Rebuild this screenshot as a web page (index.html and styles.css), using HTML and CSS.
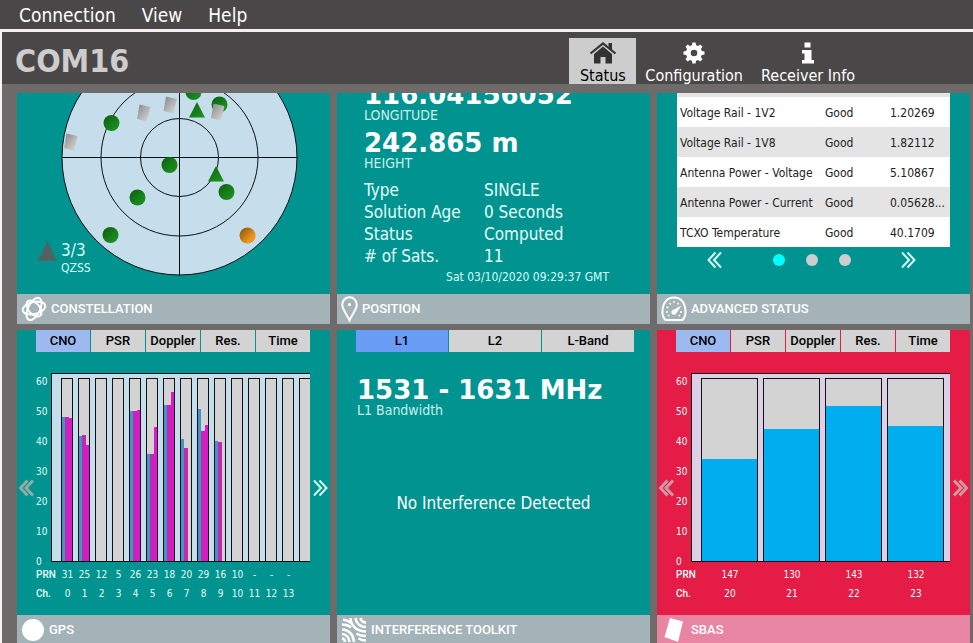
FILE: index.html
```html
<!DOCTYPE html>
<html lang="en">
<head>
<meta charset="utf-8">
<title>COM16</title>
<link rel="stylesheet" href="styles.css">
</head>
<body>
<svg class="defs" width="0" height="0" aria-hidden="true">
  <symbol id="chev-left" viewBox="0 0 16 18"><path d="M8.500 1.500L1.500 9l7 7.500M14 1.500L7 9l7 7.500" fill="none" stroke="currentColor"/></symbol>
  <symbol id="chev-right" viewBox="0 0 16 18"><path d="M7.500 1.500l7 7.500-7 7.500M2 1.500L9 9l-7 7.500" fill="none" stroke="currentColor"/></symbol>
</svg>
<nav class="menubar" aria-label="Menu">
  <button type="button">Connection</button>
  <button type="button">View</button>
  <button type="button">Help</button>
</nav>
<div class="window">
  <header class="header">
    <h1>COM16</h1>
    <nav class="nav" aria-label="Pages">
      <a href="#status" class="active">
        <svg width="28" height="22" viewBox="0 0 28 22" aria-hidden="true"><path d="M14 4.600L5 12v9.500h6.500V15h5v6.500H23V12z" fill="currentColor"/><path d="M1.500 11.500L14 1.500l12.500 10" fill="none" stroke="currentColor" stroke-width="2.200"/><path d="M19.500 1H23v8l-3.500-3z" fill="currentColor"/></svg>
        <span>Status</span>
      </a>
      <a href="#configuration">
        <svg width="22" height="22" viewBox="0 0 22 22" aria-hidden="true"><g fill="currentColor"><path fill-rule="evenodd" d="M11 3a8 8 0 1 0 0 16a8 8 0 1 0 0-16zm0 4.700a3.300 3.300 0 1 1 0 6.600a3.300 3.300 0 1 1 0-6.600z"/><path id="cog" d="M8.800 4l.6-3.500h3.200l.6 3.500zM8.800 18l.6 3.500h3.200l.6-3.500zM4 8.800l-3.500.6v3.200l3.500.6zM18 8.800l3.500.6v3.200l-3.500.6z"/><use href="#cog" transform="rotate(45 11 11)"/></g></svg>
        <span>Configuration</span>
      </a>
      <a href="#receiver">
        <svg width="14" height="22" viewBox="0 0 14 22" aria-hidden="true"><path d="M3.500.5h6v5h-6zM1 8h9.500v10H13v3.500H1V18h2.500v-6.500H1z" fill="currentColor"/></svg>
        <span>Receiver Info</span>
      </a>
    </nav>
  </header>
  <main class="board">
    <section class="tile">
      <div class="content sky">
        <svg viewBox="17 93 313 201" preserveAspectRatio="xMidYMax slice" role="img" aria-label="Sky plot">
          <defs>
            <linearGradient id="green" x1="0" y1="0" x2="1" y2="1"><stop offset="0" stop-color="#0a5c10"/><stop offset=".6" stop-color="#17831b"/><stop offset="1" stop-color="#1c9420"/></linearGradient>
            <linearGradient id="orange" x1="0" y1="0" x2="1" y2="1"><stop offset="0" stop-color="#7a5212"/><stop offset=".7" stop-color="#ef941c"/></linearGradient>
            <linearGradient id="silver" x1="0" y1="0" x2="1" y2="1"><stop offset="0" stop-color="#858585"/><stop offset="1" stop-color="#dedede"/></linearGradient>
            <path id="sbas" d="M-4.500-8.500l11 2.500-3.500 14.500-10-2.500z" fill="url(#silver)"/>
            <path id="qzss" d="M0-8l8 15.500H-8z" fill="url(#green)"/>
          </defs>
          <g stroke="#0b0f14" fill="none">
            <circle cx="179.500" cy="157.500" r="117.500" fill="#c6deeb"/>
            <circle cx="179.500" cy="157.500" r="78.500"/>
            <circle cx="179.500" cy="157.500" r="39"/>
            <path d="M62 157.500h236M179.500 40v236"/>
          </g>
          <g fill="url(#green)">
            <circle cx="193.500" cy="92" r="8"/><circle cx="219.500" cy="104.500" r="8"/><circle cx="111.500" cy="123" r="8"/>
            <circle cx="169.500" cy="165" r="8"/><circle cx="137.500" cy="197.500" r="8"/><circle cx="226.500" cy="192" r="8"/><circle cx="110.500" cy="235" r="8"/>
          </g>
          <circle cx="247.500" cy="235.500" r="8" fill="url(#orange)"/>
          <use href="#qzss" x="197" y="110"/><use href="#qzss" x="216" y="174"/>
          <use href="#sbas" x="71" y="142"/><use href="#sbas" x="144" y="113"/><use href="#sbas" x="170.500" y="105"/><use href="#sbas" x="218" y="112"/>
          <path d="M47.500 241l9.500 20H37.500z" fill="#4d6463"/>
          <text class="count" x="61" y="256">3/3</text>
          <text class="system" x="61" y="272">QZSS</text>
        </svg>
      </div>
      <h2 class="bar">
        <svg width="26" height="26" viewBox="0 0 26 26" aria-hidden="true"><g fill="none" stroke="currentColor" stroke-width="2"><ellipse cx="13" cy="12" rx="11.500" ry="6" transform="rotate(-14 13 12)"/><ellipse cx="13" cy="13" rx="12" ry="6" transform="rotate(-64 13 13)"/><ellipse cx="13" cy="12.500" rx="9.500" ry="5.500" transform="rotate(50 13 12.500)"/></g></svg>
        CONSTELLATION
      </h2>
    </section>

    <section class="tile">
      <div class="content position">
        <p class="big">116.04156052°</p>
        <p class="caption">LONGITUDE</p>
        <p class="big">242.865 m</p>
        <p class="caption">HEIGHT</p>
        <dl>
          <dt>Type</dt><dd>SINGLE</dd>
          <dt>Solution Age</dt><dd>0 Seconds</dd>
          <dt>Status</dt><dd>Computed</dd>
          <dt># of Sats.</dt><dd>11</dd>
        </dl>
        <p class="time">Sat 03/10/2020 09:29:37 GMT</p>
      </div>
      <h2 class="bar">
        <svg width="17" height="26" viewBox="0 0 17 26" aria-hidden="true"><path d="M8.500 24.500C6 18.500 1.200 13.500 1.200 8.600a7.300 7.300 0 0 1 14.600 0c0 4.900-4.800 9.900-7.300 15.900z" fill="none" stroke="currentColor" stroke-width="2"/><circle cx="8.500" cy="8.500" r="1.600" fill="currentColor"/></svg>
        POSITION
      </h2>
    </section>

    <section class="tile">
      <div class="content health">
        <table>
          <tbody>
            <tr><td>Voltage Rail - 1V2</td><td>Good</td><td>1.20269</td></tr>
            <tr><td>Voltage Rail - 1V8</td><td>Good</td><td>1.82112</td></tr>
            <tr><td>Antenna Power - Voltage</td><td>Good</td><td>5.10867</td></tr>
            <tr><td>Antenna Power - Current</td><td>Good</td><td>0.05628...</td></tr>
            <tr><td>TCXO Temperature</td><td>Good</td><td>40.1709</td></tr>
          </tbody>
        </table>
        <div class="pager">
          <button type="button" class="arrow" aria-label="Previous"><svg width="16" height="18"><use href="#chev-left"/></svg></button>
          <div class="dots">
            <button type="button" class="dot current" aria-label="Page 1"></button>
            <button type="button" class="dot" aria-label="Page 2"></button>
            <button type="button" class="dot" aria-label="Page 3"></button>
          </div>
          <button type="button" class="arrow" aria-label="Next"><svg width="16" height="18"><use href="#chev-right"/></svg></button>
        </div>
      </div>
      <h2 class="bar">
        <svg width="26" height="26" viewBox="0 0 26 26" aria-hidden="true"><path d="M4.500 24A11.500 11.500 0 0 1 1.500 15.500C1.500 7 6 1.500 13 1.500S24.500 7 24.500 15.500A11.500 11.500 0 0 1 21.500 24z" fill="none" stroke="currentColor" stroke-width="2"/><path d="M5 16h2M5.500 11l2 .8M8.500 7l1.200 1.500M13 5v2M17.500 7l-1 1.500M21 16h-2M7 20l1.500-1M19 20l-1.500-1" stroke="currentColor" stroke-width="1.400"/><path d="M20.500 9.500l-5.200 7.800a2.600 2.600 0 1 1-2.800-3.600z" fill="currentColor"/></svg>
        ADVANCED STATUS
      </h2>
    </section>

    <section class="tile">
      <div class="content signal">
        <div class="tabs">
          <button type="button" class="on">CNO</button><button type="button">PSR</button><button type="button">Doppler</button><button type="button">Res.</button><button type="button">Time</button>
        </div>
        <div class="chart">
          <button type="button" class="arrow dim" aria-label="Previous"><svg width="16" height="18"><use href="#chev-left"/></svg></button>
          <div class="graph">
            <div class="axis"><span>60</span><span>50</span><span>40</span><span>30</span><span>20</span><span>10</span><span>0</span></div>
            <div class="plot narrow">
              <div class="slot"><i style="--v:48"></i><i style="--v:48"></i><i style="--v:47.700"></i></div>
              <div class="slot"><i style="--v:41.700"></i><i style="--v:42"></i><i style="--v:38.700"></i></div>
              <div class="slot"></div>
              <div class="slot"></div>
              <div class="slot"><i style="--v:50"></i><i style="--v:50"></i><i style="--v:50.300"></i></div>
              <div class="slot"><i style="--v:35.700"></i><i style="--v:35.700"></i><i style="--v:44.700"></i></div>
              <div class="slot"><i style="--v:52"></i><i style="--v:52"></i><i style="--v:56.300"></i></div>
              <div class="slot"><i style="--v:40.700"></i><i style="--v:37.700"></i></div>
              <div class="slot"><i style="--v:50.700"></i><i style="--v:43.300"></i><i style="--v:45.300"></i></div>
              <div class="slot"><i style="--v:40"></i><i style="--v:39.700"></i></div>
              <div class="slot"></div><div class="slot"></div><div class="slot"></div><div class="slot"></div><div class="slot"></div>
            </div>
            <table class="legend narrow">
              <tbody>
                <tr><th scope="row">PRN</th><td>31</td><td>25</td><td>12</td><td>5</td><td>26</td><td>23</td><td>18</td><td>20</td><td>29</td><td>16</td><td>10</td><td>-</td><td>-</td><td>-</td></tr>
                <tr><th scope="row">Ch.</th><td>0</td><td>1</td><td>2</td><td>3</td><td>4</td><td>5</td><td>6</td><td>7</td><td>8</td><td>9</td><td>10</td><td>11</td><td>12</td><td>13</td></tr>
              </tbody>
            </table>
          </div>
          <button type="button" class="arrow" aria-label="Next"><svg width="16" height="18"><use href="#chev-right"/></svg></button>
        </div>
      </div>
      <h2 class="bar">
        <svg width="24" height="24" viewBox="0 0 24 24" aria-hidden="true"><circle cx="12" cy="12" r="11" fill="currentColor"/></svg>
        GPS
      </h2>
    </section>

    <section class="tile">
      <div class="content signal">
        <div class="tabs bands">
          <button type="button" class="on">L1</button><button type="button">L2</button><button type="button">L-Band</button>
        </div>
        <div class="interference">
          <p class="big">1531 - 1631 MHz</p>
          <p class="caption">L1 Bandwidth</p>
          <p class="verdict">No Interference Detected</p>
        </div>
      </div>
      <h2 class="bar">
        <svg width="26" height="26" viewBox="0 0 26 26" aria-hidden="true"><g fill="none" stroke="currentColor" stroke-width="2.600"><path d="M1 12.500c6.500 0 11.500 5 12 12.500M1 17c4 0 7 3 7.500 8M1 21.500c1.500 0 2.800 1.200 3 3.500M1 7.500c4.500 0 7 1.200 9 3M2 2.500c4 .3 6 1.800 8 3.500M9.500 1c.5 8 6.500 13.500 15.500 13.500M14.500 1c.5 5 4.500 9 10.500 9M19.500 1c.3 2.500 2.500 4.500 5.500 4.500M25 19c-4 0-7-.8-9.500-2.500M25 23.500c-3 0-5.500-.8-7.500-2.300"/></g></svg>
        INTERFERENCE TOOLKIT
      </h2>
    </section>

    <section class="tile alert">
      <div class="content signal">
        <div class="tabs">
          <button type="button" class="on">CNO</button><button type="button">PSR</button><button type="button">Doppler</button><button type="button">Res.</button><button type="button">Time</button>
        </div>
        <div class="chart">
          <button type="button" class="arrow dim" aria-label="Previous"><svg width="16" height="18"><use href="#chev-left"/></svg></button>
          <div class="graph">
            <div class="axis"><span>60</span><span>50</span><span>40</span><span>30</span><span>20</span><span>10</span><span>0</span></div>
            <div class="plot wide">
              <div class="slot"><i style="--v:34"></i></div>
              <div class="slot"><i style="--v:44"></i></div>
              <div class="slot"><i style="--v:51.700"></i></div>
              <div class="slot"><i style="--v:45"></i></div>
            </div>
            <table class="legend wide">
              <tbody>
                <tr><th scope="row">PRN</th><td>147</td><td>130</td><td>143</td><td>132</td></tr>
                <tr><th scope="row">Ch.</th><td>20</td><td>21</td><td>22</td><td>23</td></tr>
              </tbody>
            </table>
          </div>
          <button type="button" class="arrow dim" aria-label="Next"><svg width="16" height="18"><use href="#chev-right"/></svg></button>
        </div>
      </div>
      <h2 class="bar">
        <svg width="26" height="26" viewBox="0 0 26 26" aria-hidden="true"><path d="M9 1l13 3.500L17 25 3.500 20z" fill="currentColor"/></svg>
        SBAS
      </h2>
    </section>
  </main>
</div>
</body>
</html>
```
FILE: styles.css
```css
* { box-sizing: border-box; }

:root {
  --teal: #009390;
  --ui: "DejaVu Sans Condensed", "Noto Sans", sans-serif;
  --label: Roboto, "Liberation Sans", sans-serif;
}

body {
  margin: 0;
  height: 100vh;
  overflow: hidden;
  display: flex;
  flex-direction: column;
  background: #4a4748;
  color: #fff;
  font-family: var(--ui);
}

h1, h2, p, dl, dd { margin: 0; }
button { border: 0; padding: 0; background: none; color: inherit; font: inherit; }
svg { display: block; flex: none; }
.defs { position: absolute; }

.menubar {
  flex: none;
  display: flex;
  gap: 26px;
  height: 29px;
  padding-left: 19px;
  font-size: 19px;
}

.window {
  flex: 1;
  min-height: 0;
  display: flex;
  flex-direction: column;
  border-top: 3px solid #f6eef0;
  border-left: 2px solid #f4f4f4;
  background: #6f6b6b;
}

.header {
  flex: none;
  display: flex;
  justify-content: space-between;
  height: 52px;
  padding: 6px 109px 0 13px;
  background: #4a4748;
}
.header h1 { font-size: 32px; line-height: 46px; color: #cdcdcd; }

.nav { display: flex; }
.nav a {
  display: flex;
  flex-direction: column;
  align-items: center;
  gap: 2px;
  padding: 4px 9px 0;
  color: #fff;
  font-size: 16px;
  line-height: 20px;
  text-decoration: none;
}
.nav a.active { min-width: 67px; background: #cdcdcd; color: #000; }
.nav a.active svg { color: #333; }

.board {
  flex: 1;
  min-height: 0;
  display: grid;
  grid-template-columns: repeat(3, minmax(0, 1fr));
  grid-template-rows: 231px minmax(315px, auto);
  gap: 6px 7px;
  padding: 9px 3px 0 15px;
}

.tile {
  display: flex;
  flex-direction: column;
  min-height: 0;
  overflow: hidden;
  background: var(--teal);
}
.tile.alert { background: #e51c46; }

.content { flex: 1; min-height: 0; display: flex; flex-direction: column; }

.bar {
  flex: none;
  display: flex;
  align-items: center;
  gap: 4px;
  height: 30px;
  padding-left: 4px;
  background: #a3b3b7;
  font: 500 13px/30px var(--label);
}
.alert .bar { background: #e785a2; }

.sky svg { width: 100%; height: 100%; }
.count { fill: #d5fffa; font-size: 17px; }
.system { fill: #d5fffa; font-size: 12px; }

.big { font: 700 26px/25px "DejaVu Sans", sans-serif; }
.caption { font-size: 14px; line-height: 14px; color: #c8f0ec; }

.position { justify-content: flex-end; padding: 0 41px 7px 27px; }
.position .caption { margin-bottom: 9px; }
.position dl {
  display: grid;
  grid-template-columns: 120px 1fr;
  font-size: 17px;
  line-height: 22px;
  color: #e4fffc;
}
.time { font-size: 12px; line-height: 20px; text-align: right; color: #d5fffa; }

.health { justify-content: flex-end; padding: 0 20px; }
.health table {
  width: 100%;
  border-spacing: 0;
  table-layout: fixed;
  border-top: 4px solid #e4e4e4;
  background: #fff;
  color: #222;
  font-size: 12px;
}
.health tr:nth-child(even) { background: #e4e4e4; }
.health td { height: 30px; padding: 1px 0 0 3px; white-space: nowrap; }
.health td:nth-child(1) { width: 145px; }
.health td:nth-child(2) { width: 65px; }
.pager {
  display: flex;
  align-items: center;
  justify-content: space-between;
  margin-bottom: 21px;
  padding: 0 34px 0 30px;
  height: 26px;
}
.dots { display: flex; gap: 21px; }
.dot { width: 12px; height: 12px; border-radius: 50%; background: #cdcdcd; }
.dot.current { background: #0ff; }

.arrow { display: flex; align-items: center; justify-content: center; color: #d5fffa; stroke-width: 2; }
.arrow.dim { color: #93aaa8; stroke-width: 3; }
.alert .arrow.dim { color: #cf9a9f; }

.tabs { display: flex; gap: 1px; margin: 0 20px 0 19px; }
.tabs button {
  flex: 1;
  height: 22px;
  background: #d3d3d3;
  color: #000;
  font: 500 13px/22px var(--label);
}
.tabs .on { background: #9dbaf0; }
.tabs.bands { margin-right: 16px; }
.tabs.bands .on { background: #6a9df5; }

.chart {
  display: grid;
  grid-template-columns: 19px minmax(0, 1fr) 20px;
  padding: 21px 0 12px;
}
.graph {
  display: grid;
  grid-template-columns: 15px minmax(0, 1fr);
  grid-template-rows: 192px auto;
  font-size: 10px;
  line-height: 10px;
  color: #e4fffc;
}
.axis {
  display: flex;
  flex-direction: column;
  justify-content: space-between;
  height: 190px;
  margin-top: 4px;
}
.plot {
  display: flex;
  gap: 5px;
  height: 189px;
  padding: 4px 0 0 9px;
  overflow: hidden;
  border: solid #111;
  border-width: 1px 0 1px 1px;
  background: #c6deeb;
}
.alert .plot { background: #dcd0e6; }
.slot {
  flex: none;
  display: flex;
  align-items: flex-end;
  border: solid #111;
  border-width: 1px 1px 0;
  background: #d3d3d3;
}
.narrow .slot { width: 12px; }
.wide .slot { width: 57px; }
.slot i { height: calc(var(--v) * 3px); background: #00aeef; }
.wide i { flex: 1; }
.narrow i { width: 3px; background: #4392c8; }
.narrow i:nth-child(2) { width: 4px; background: #c428ae; }
.narrow i:nth-child(3) { background: #e214cf; }

.legend {
  grid-column: 1 / -1;
  border-collapse: collapse;
  table-layout: fixed;
  width: 0;
}
.legend th, .legend td { height: 19px; padding: 0; text-align: center; }
.legend th { width: 23px; text-align: left; font: 500 10px/10px var(--label); }
.legend.narrow td { width: 17px; }
.legend.wide td { width: 62px; }

.interference { padding: 26px 20px 0; }
.verdict {
  margin-top: 75px;
  font-size: 17px;
  line-height: 22px;
  text-align: center;
}
```
